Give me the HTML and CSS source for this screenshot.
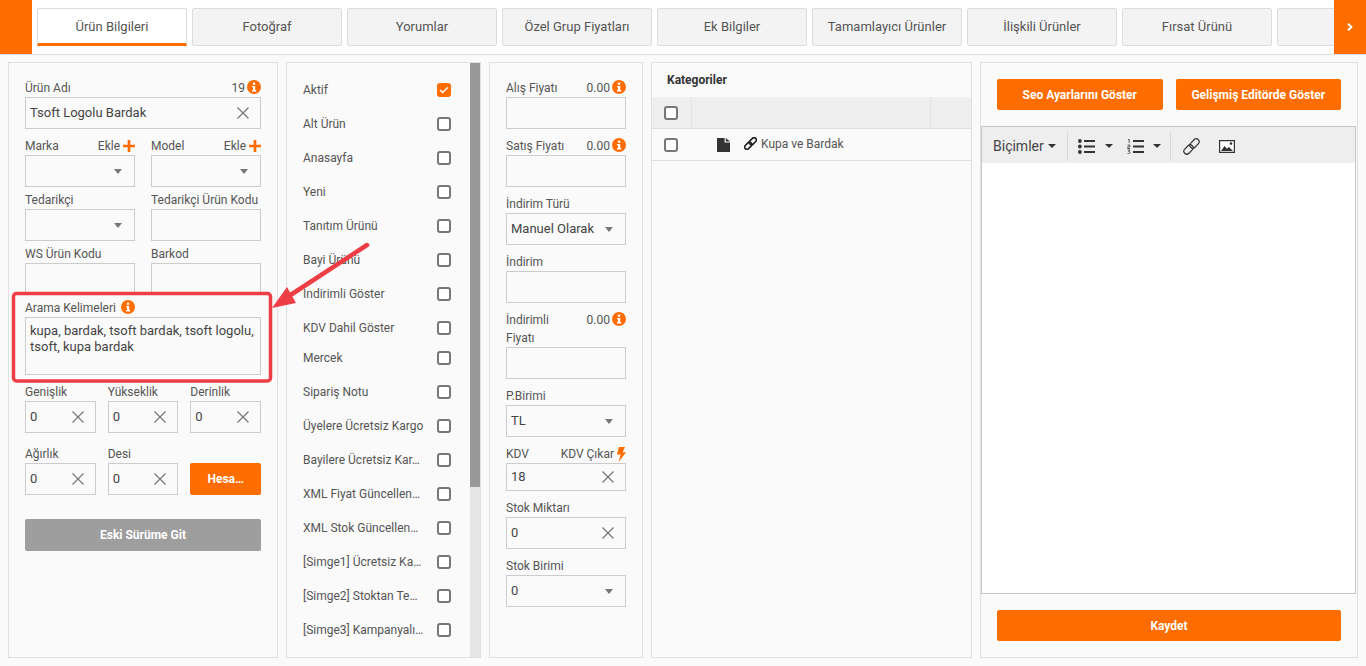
FILE: index.html
```html
<!DOCTYPE html>
<html lang="tr">
<head>
  <meta charset="UTF-8" />
  <title>Ürün Bilgileri</title>
  <link rel="stylesheet" href="styles.css">
</head>
<body>

  <!-- shared icons -->
  <svg class="icon-defs" width="0" height="0">
    <symbol id="i-info" viewBox="0 0 14 14">
      <circle cx="7" cy="7" r="7" fill="#ff6c00" />
      <rect x="5.9" y="2.6" width="2.3" height="2.2" fill="#fff" />
      <path d="M5 5.9h3.2v4.1h1v1.4H5v-1.4h1V7.3H5z" fill="#fff" />
    </symbol>
    <symbol id="i-plus" viewBox="0 0 12 12">
      <path d="M4.7 0h2.6v4.7H12v2.6H7.3V12H4.7V7.3H0V4.7h4.7z" fill="#ff6c00" />
    </symbol>
    <symbol id="i-x" viewBox="0 0 12 12">
      <path d="M.5.5l11 11M11.5.5l-11 11" stroke="#777" stroke-width="1.2" fill="none" />
    </symbol>
    <symbol id="i-link" viewBox="0 0 16 16">
      <g transform="rotate(-45 8 8)" fill="none" stroke="currentColor">
        <rect x="-1" y="5.2" width="10" height="5.6" rx="2.8" />
        <rect x="7" y="5.2" width="10" height="5.6" rx="2.8" />
      </g>
    </symbol>
  </svg>

  <header class="topbar">
    <div class="topbar-arrow"></div>
    <nav class="tabs">
      <a class="tab active">Ürün Bilgileri</a>
      <a class="tab">Fotoğraf</a>
      <a class="tab">Yorumlar</a>
      <a class="tab">Özel Grup Fiyatları</a>
      <a class="tab">Ek Bilgiler</a>
      <a class="tab">Tamamlayıcı Ürünler</a>
      <a class="tab">İlişkili Ürünler</a>
      <a class="tab">Fırsat Ürünü</a>
      <a class="tab"></a>
    </nav>
    <div class="topbar-arrow">
      <svg width="6" height="8" viewBox="0 0 6 8"><path d="M1 .8L4.4 4 1 7.2" fill="none" stroke="#fff" stroke-width="2" /></svg>
    </div>
  </header>

  <main class="page">

    <!-- product details -->
    <section class="panel panel-product">
      <div class="group">
        <div class="label"><span>Ürün Adı</span><span class="label-side">19 <svg class="info"><use href="#i-info" /></svg></span></div>
        <div class="field"><span class="value">Tsoft Logolu Bardak</span><svg class="clear"><use href="#i-x" /></svg></div>
      </div>
      <div class="cols-2">
        <div class="group">
          <div class="label"><span>Marka</span><span class="label-side">Ekle <svg class="plus"><use href="#i-plus" /></svg></span></div>
          <div class="field"><span class="value"></span><i class="caret"></i></div>
        </div>
        <div class="group">
          <div class="label"><span>Model</span><span class="label-side">Ekle <svg class="plus"><use href="#i-plus" /></svg></span></div>
          <div class="field"><span class="value"></span><i class="caret"></i></div>
        </div>
        <div class="group">
          <div class="label"><span>Tedarikçi</span></div>
          <div class="field"><span class="value"></span><i class="caret"></i></div>
        </div>
        <div class="group">
          <div class="label"><span>Tedarikçi Ürün Kodu</span></div>
          <div class="field"></div>
        </div>
        <div class="group">
          <div class="label"><span>WS Ürün Kodu</span></div>
          <div class="field"></div>
        </div>
        <div class="group">
          <div class="label"><span>Barkod</span></div>
          <div class="field"></div>
        </div>
      </div>
      <div class="group">
        <div class="label label-start"><span>Arama Kelimeleri</span><svg class="info"><use href="#i-info" /></svg></div>
        <div class="field field-area">kupa, bardak, tsoft bardak, tsoft logolu, tsoft, kupa bardak</div>
      </div>
      <div class="cols-3">
        <div class="group">
          <div class="label"><span>Genişlik</span></div>
          <div class="field"><span class="value">0</span><svg class="clear"><use href="#i-x" /></svg></div>
        </div>
        <div class="group">
          <div class="label"><span>Yükseklik</span></div>
          <div class="field"><span class="value">0</span><svg class="clear"><use href="#i-x" /></svg></div>
        </div>
        <div class="group">
          <div class="label"><span>Derinlik</span></div>
          <div class="field"><span class="value">0</span><svg class="clear"><use href="#i-x" /></svg></div>
        </div>
      </div>
      <div class="cols-3 cols-spaced">
        <div class="group">
          <div class="label"><span>Ağırlık</span></div>
          <div class="field"><span class="value">0</span><svg class="clear"><use href="#i-x" /></svg></div>
        </div>
        <div class="group">
          <div class="label"><span>Desi</span></div>
          <div class="field"><span class="value">0</span><svg class="clear"><use href="#i-x" /></svg></div>
        </div>
        <div class="group group-btn">
          <button class="btn btn-tall">Hesa…</button>
        </div>
      </div>
      <button class="btn btn-grey">Eski Sürüme Git</button>
    </section>

    <!-- flags -->
    <section class="panel panel-flags">
      <div class="check-list">
        <div class="check-row"><span>Aktif</span><i class="check on"><svg width="10" height="8" viewBox="0 0 10 8"><path d="M1 4l2.6 2.6L9 1.2" fill="none" stroke="#fff" stroke-width="1.4" /></svg></i></div>
        <div class="check-row"><span>Alt Ürün</span><i class="check"></i></div>
        <div class="check-row"><span>Anasayfa</span><i class="check"></i></div>
        <div class="check-row"><span>Yeni</span><i class="check"></i></div>
        <div class="check-row"><span>Tanıtım Ürünü</span><i class="check"></i></div>
        <div class="check-row"><span>Bayi Ürünü</span><i class="check"></i></div>
        <div class="check-row"><span>İndirimli Göster</span><i class="check"></i></div>
        <div class="check-row"><span>KDV Dahil Göster</span><i class="check"></i></div>
        <div class="check-row check-row-short"><span>Mercek</span><i class="check"></i></div>
        <div class="check-row"><span>Sipariş Notu</span><i class="check"></i></div>
        <div class="check-row"><span>Üyelere Ücretsiz Kargo</span><i class="check"></i></div>
        <div class="check-row"><span>Bayilere Ücretsiz Kar…</span><i class="check"></i></div>
        <div class="check-row"><span>XML Fiyat Güncellen…</span><i class="check"></i></div>
        <div class="check-row"><span>XML Stok Güncellen…</span><i class="check"></i></div>
        <div class="check-row"><span>[Simge1] Ücretsiz Ka…</span><i class="check"></i></div>
        <div class="check-row"><span>[Simge2] Stoktan Te…</span><i class="check"></i></div>
        <div class="check-row"><span>[Simge3] Kampanyalı…</span><i class="check"></i></div>
      </div>
      <div class="scrollbar"><div class="scrollbar-thumb"></div></div>
    </section>

    <!-- prices -->
    <section class="panel panel-price">
      <div class="group">
        <div class="label"><span>Alış Fiyatı</span><span class="label-side">0.00 <svg class="info"><use href="#i-info" /></svg></span></div>
        <div class="field"></div>
      </div>
      <div class="group">
        <div class="label"><span>Satış Fiyatı</span><span class="label-side">0.00 <svg class="info"><use href="#i-info" /></svg></span></div>
        <div class="field"></div>
      </div>
      <div class="group">
        <div class="label"><span>İndirim Türü</span></div>
        <div class="field"><span class="value">Manuel Olarak</span><i class="caret"></i></div>
      </div>
      <div class="group">
        <div class="label"><span>İndirim</span></div>
        <div class="field"></div>
      </div>
      <div class="group">
        <div class="label"><span>İndirimli</span><span class="label-side">0.00 <svg class="info"><use href="#i-info" /></svg></span></div>
        <div class="label"><span>Fiyatı</span></div>
        <div class="field"></div>
      </div>
      <div class="group">
        <div class="label"><span>P.Birimi</span></div>
        <div class="field"><span class="value">TL</span><i class="caret"></i></div>
      </div>
      <div class="group">
        <div class="label"><span>KDV</span><span class="label-side">KDV Çıkar
          <svg class="bolt" viewBox="0 0 10 15"><path d="M3 0h6L6.6 5.2H10L2.6 15l2-7.4H.8z" fill="#ff6c00" /></svg></span></div>
        <div class="field field-short"><span class="value">18</span><svg class="clear"><use href="#i-x" /></svg></div>
      </div>
      <div class="group">
        <div class="label"><span>Stok Miktarı</span></div>
        <div class="field"><span class="value">0</span><svg class="clear"><use href="#i-x" /></svg></div>
      </div>
      <div class="group">
        <div class="label"><span>Stok Birimi</span></div>
        <div class="field"><span class="value">0</span><i class="caret"></i></div>
      </div>
    </section>

    <!-- categories -->
    <section class="panel panel-cats">
      <h3 class="cats-title">Kategoriler</h3>
      <div class="cats-head">
        <div class="cats-check"><i class="check"></i></div>
        <div class="cats-mid"></div>
        <div class="cats-end"></div>
      </div>
      <div class="cats-row">
        <div class="cats-check"><i class="check"></i></div>
        <svg class="file-icon" viewBox="0 0 13 14"><path d="M0 0h7.6v4.6H13V14H0zM8.8 0L13 3.4H8.8z" fill="#333" /></svg>
        <svg class="link-icon"><use href="#i-link" /></svg>
        <span class="cats-name">Kupa ve Bardak</span>
      </div>
    </section>

    <!-- description -->
    <section class="panel panel-editor">
      <div class="editor-actions">
        <button class="btn">Seo Ayarlarını Göster</button>
        <button class="btn">Gelişmiş Editörde Göster</button>
      </div>
      <div class="editor">
        <div class="editor-bar">
          <div class="bar-group bar-formats">Biçimler <i class="caret caret-dark"></i></div>
          <div class="bar-group bar-lists">
            <svg width="17" height="15" viewBox="0 0 17 15"><path d="M0 2a1.9 1.9 0 1 0 3.8 0A1.9 1.9 0 1 0 0 2zM0 7.5a1.9 1.9 0 1 0 3.8 0 1.900 1.900 0 1 0-3.800 0zM0 13a1.900 1.900 0 1 0 3.800 0 1.900 1.900 0 1 0-3.800 0z" fill="#333" /><path d="M6 2h11M6 7.500h11M6 13h11" stroke="#333" stroke-width="2" /></svg>
            <i class="caret caret-dark"></i>
            <svg class="list-num" width="17" height="15" viewBox="0 0 17 15"><path d="M1 .5h1.200v3.500M.6 6h2.200v1.800H.8v1.700h2.300M.6 11h2.400L1.600 12.500c1 0 1.500.4 1.500 1s-.6 1-1.500 1H.6" fill="none" stroke="#333" stroke-width=".8" /><path d="M6 2h11M6 7.500h11M6 13h11" stroke="#333" stroke-width="2" /></svg>
            <i class="caret caret-dark caret-num"></i>
          </div>
          <div class="bar-group bar-media">
            <svg class="bar-link"><use href="#i-link" /></svg>
            <svg width="16" height="13" viewBox="0 0 16 13"><path d="M.6.6h14.800v11.800H.6z" fill="#fff" stroke="#333" stroke-width="1.200" /><path d="M2 11l3.600-5 2.400 2.800 2-1.800 4 4z" fill="#333" /><circle cx="12" cy="3.600" r="1.300" fill="#333" /></svg>
          </div>
        </div>
        <div class="editor-body"></div>
      </div>
      <div class="editor-save">
        <button class="btn btn-save">Kaydet</button>
      </div>
    </section>

  </main>

  <!-- red callout drawn on top of the form -->
  <svg class="callout" width="1366" height="666" viewBox="0 0 1366 666">
    <rect x="13.500" y="293.500" width="257" height="87.500" rx="3" fill="none" stroke="#ee3e45" stroke-width="3.500" />
    <path d="M367 245L289 296" stroke="#ee3e45" stroke-width="4.500" stroke-linecap="round" />
    <path d="M272 308L287 287L296 303z" fill="#ee3e45" />
  </svg>

</body>
</html>
```

FILE: styles.css
```css
* {
  box-sizing: border-box;
}

html, body {
  height: 100%;
}

body {
  margin: 0;
  position: relative;
  overflow: hidden;
  background: #fafafa;
  font-family: Roboto, 'Liberation Sans', sans-serif;
  font-size: 12px;
  color: #555;
}

.icon-defs {
  position: absolute;
}

/* top bar */
.topbar {
  display: flex;
  height: 55px;
  background: #fff;
  border-bottom: 1px solid #ddd;
}

.topbar-arrow {
  flex: none;
  display: flex;
  align-items: center;
  justify-content: center;
  width: 32px;
  height: 54px;
  background: #ff6c00;
}

.tabs {
  flex: 1;
  display: flex;
  gap: 5px;
  padding: 8px 0 0 5px;
  overflow: hidden;
}

.tab {
  flex: none;
  width: 150px;
  height: 38px;
  line-height: 36px;
  text-align: center;
  font-size: 13px;
  color: #555;
  background: #f3f3f3;
  border: 1px solid #ddd;
  border-radius: 2px;
}

.tab.active {
  background: #fff;
  border-bottom: 3px solid #ff6c00;
  border-radius: 2px 2px 0 0;
}

/* columns */
.page {
  display: flex;
  gap: 8px;
  height: 611px;
  padding: 7px 8px 8px;
}

.panel {
  flex: none;
  background: #fafafa;
  border: 1px solid #e0e0e0;
}

.panel-product {
  width: 270px;
  padding: 16px;
}

.panel-flags {
  width: 195px;
  display: flex;
  overflow: hidden;
}

.panel-price {
  width: 154px;
  padding: 16px;
}

.panel-cats {
  width: 321px;
}

.panel-editor {
  width: 378px;
  display: flex;
  flex-direction: column;
  padding: 16px 0;
}

/* form bits */
.group {
  margin-bottom: 8px;
}

.label {
  display: flex;
  align-items: center;
  justify-content: space-between;
  height: 18px;
  line-height: 18px;
  white-space: nowrap;
  color: #555;
}

.label-start {
  justify-content: flex-start;
  gap: 5px;
}

.label-side {
  display: flex;
  align-items: center;
  gap: 2px;
}

.info {
  width: 14px;
  height: 14px;
  margin-top: -3px;
}

.plus {
  width: 12px;
  height: 12px;
  margin-left: 1px;
}

.bolt {
  width: 10px;
  height: 15px;
}

.field {
  display: flex;
  align-items: center;
  height: 32px;
  padding: 0 11px 0 4px;
  background: #fafafa;
  border: 1px solid #ccc;
  font-size: 13px;
  color: #444;
}

.field-short {
  height: 28px;
}

.field-area {
  display: block;
  height: 58px;
  padding: 5px 4px;
  line-height: 16px;
}

.value {
  flex: 1;
  margin-bottom: 2px;
  white-space: nowrap;
}

.clear {
  flex: none;
  width: 12px;
  height: 12px;
}

.caret {
  flex: none;
  width: 0;
  height: 0;
  margin-right: 1px;
  border-top: 5px solid #777;
  border-left: 4.5px solid transparent;
  border-right: 4.5px solid transparent;
}

.caret-dark {
  margin: 0;
  border-top: 4px solid #333;
  border-left: 4px solid transparent;
  border-right: 4px solid transparent;
}

.cols-2 {
  display: grid;
  grid-template-columns: 1fr 1fr;
  column-gap: 16px;
  row-gap: 0;
}

.cols-2 .group {
  margin-bottom: 4px;
}

.cols-3 {
  display: grid;
  grid-template-columns: repeat(3, minmax(0, 1fr));
  column-gap: 12px;
}

.cols-3 .group {
  margin-bottom: 12px;
}

.cols-spaced .group {
  margin-bottom: 24px;
}

.group-btn {
  padding-top: 18px;
}

.btn {
  display: block;
  width: 100%;
  height: 31px;
  padding: 0;
  background: #ff6c00;
  border: none;
  border-radius: 2px;
  color: #fff;
  font-family: inherit;
  font-size: 12px;
  font-weight: 700;
  white-space: nowrap;
}

.btn-tall {
  height: 32px;
}

.btn-grey {
  height: 32px;
  background: #9e9e9e;
}

/* checkbox column */
.check-list {
  flex: 1;
  min-width: 0;
  padding: 10px 19px 0 16px;
}

.check-row {
  display: flex;
  align-items: center;
  justify-content: space-between;
  height: 34px;
  white-space: nowrap;
}

.check-row-short {
  height: 30px;
  padding-bottom: 4px;
}

.check {
  flex: none;
  display: flex;
  align-items: center;
  justify-content: center;
  width: 14px;
  height: 14px;
  background: #fff;
  border: 2px solid #777;
  border-radius: 3px;
}

.check.on {
  background: #ff6c00;
  border-color: #ff6c00;
}

.scrollbar {
  flex: none;
  width: 10px;
  background: #e6e6e6;
}

.scrollbar-thumb {
  height: 424px;
  background: #999;
}

/* categories */
.cats-title {
  margin: 0;
  height: 34px;
  padding-left: 15px;
  line-height: 35px;
  font-size: 12px;
  font-weight: 700;
  color: #333;
}

.cats-head {
  display: flex;
  height: 32px;
  background: #eee;
  border-bottom: 1px solid #e0e0e0;
}

.cats-check {
  flex: none;
  display: flex;
  align-items: center;
  justify-content: center;
  width: 40px;
  height: 100%;
  padding-right: 2px;
  border-right: 1px solid #e4e4e4;
}

.cats-mid {
  flex: 1;
  border-right: 1px solid #e4e4e4;
}

.cats-end {
  flex: none;
  width: 40px;
}

.cats-row {
  display: flex;
  align-items: center;
  height: 32px;
  border-bottom: 1px solid #e0e0e0;
  color: #555;
}

.cats-row .cats-check {
  border-right: none;
}

.file-icon {
  flex: none;
  width: 13px;
  height: 14px;
  margin-left: 25px;
}

.link-icon {
  flex: none;
  width: 13px;
  height: 13px;
  margin: 0 4px 2px 14px;
  color: #222;
  stroke-width: 2;
}

.cats-name {
  margin-bottom: 2px;
}

/* editor */
.editor-actions {
  display: flex;
  gap: 13px;
  margin: 0 16px 16px;
}

.editor {
  flex: 1;
  display: flex;
  flex-direction: column;
  margin-right: 1px;
  border: 1px solid #c8c8c8;
}

.editor-bar {
  display: flex;
  align-items: center;
  flex: none;
  height: 36px;
  padding-top: 2px;
  background: #eee;
  color: #444;
}

.bar-group {
  display: flex;
  align-items: center;
  height: 29px;
}

.bar-formats {
  width: 86px;
  padding-left: 11px;
  gap: 4px;
  font-size: 14px;
  border-right: 1px solid #d8d8d8;
}

.bar-lists {
  width: 103px;
  padding-left: 10px;
  border-right: 1px solid #d8d8d8;
}

.bar-lists .caret {
  margin-left: 10px;
}

.bar-lists .caret-num {
  margin-left: 9px;
}

.list-num {
  margin-left: 14px;
}

.bar-media {
  padding-left: 12px;
  gap: 19px;
}

.bar-link {
  width: 17px;
  height: 17px;
  color: #333;
  stroke-width: 1.1;
}

.editor-body {
  flex: 1;
  background: #fff;
}

.editor-save {
  margin: 16px 16px 0;
}

/* callout */
.callout {
  position: absolute;
  left: 0;
  top: 0;
  pointer-events: none;
}
```
